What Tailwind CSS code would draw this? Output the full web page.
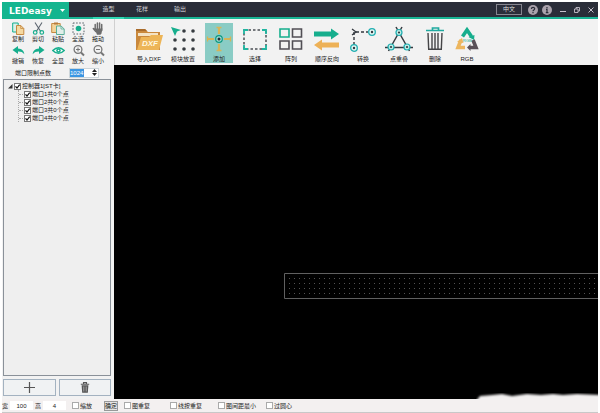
<!DOCTYPE html>
<html lang="zh-CN">
<head>
    <meta charset="UTF-8">
    <meta name="viewport" content="width=device-width, initial-scale=1.0">
    <title>LEDeasy</title>
    <script src="https://cdn.jsdelivr.net/npm/@tailwindcss/browser@4"></script>
</head>
<body class="h-screen overflow-hidden bg-white pl-0.5 pr-0.5 pt-0.5 flex flex-col font-['Liberation_Sans','Noto_Sans_CJK_SC',sans-serif] text-[6px] leading-[8px] text-[#222]">

    <!-- Title bar -->
    <header class="h-[17px] shrink-0 flex bg-[#2a2d39] border-b-2 border-[#18b595] text-[#d2d2d6]">
        <button class="w-[67px] h-[17px] shrink-0 bg-[#14b58f] text-white flex items-center justify-between pl-[7px] pr-1">
            <span class="font-['DejaVu_Sans',sans-serif] font-bold text-[9px]">LEDeasy</span>
            <svg class="w-[5px] h-[3px]" viewBox="0 0 5 3"><path d="M0 0h5L2.5 3z" fill="#fff"/></svg>
        </button>
        <nav class="flex ml-6">
            <a href="#" class="w-[31px] h-[17px] pt-[3px] text-center border-b-2 border-[#2fd8b4]">造型</a>
            <a href="#" class="w-9 pt-[3px] text-center">花样</a>
            <a href="#" class="w-10 pt-[3px] text-center">输出</a>
        </nav>
        <div class="ml-auto flex items-center pr-1">
            <button class="w-[26px] h-[11px] border border-[#85858f] text-[#ddd] leading-[9px] mr-[6px]">中文</button>
            <button aria-label="帮助" class="mr-1"><svg class="w-[10px] h-[10px]" viewBox="0 0 10 10"><circle cx="5" cy="5" r="5" fill="#aaa2ac"/><path d="M3.4 4C3.4 1.8 6.7 1.8 6.7 3.8 6.7 5 5 4.8 5 6.2M5 7v1.2" fill="none" stroke="#2a2d39" stroke-width="1.2"/></svg></button>
            <button aria-label="关于" class="mr-2"><svg class="w-[10px] h-[10px]" viewBox="0 0 10 10"><circle cx="5" cy="5" r="5" fill="#aaa2ac"/><path d="M5 1.9v1.3M4 4.3h1v3.3M3.8 7.6h2.6" fill="none" stroke="#2a2d39" stroke-width="1.2"/></svg></button>
            <button aria-label="最小化" class="mr-2"><svg class="w-[6px] h-[7px]" viewBox="0 0 6 7"><path d="M0 5.5h6" stroke="#c5c0cb"/></svg></button>
            <button aria-label="还原" class="mr-2"><svg class="w-[6px] h-[7px]" viewBox="0 0 6 7"><path d="M2 3V1.5h3.5V5H4M.5 3H4v3.5H.5z" fill="none" stroke="#c5c0cb" stroke-width=".9"/></svg></button>
            <button aria-label="关闭"><svg class="w-[6px] h-[7px]" viewBox="0 0 6 7"><path d="M.5 1.5l5 5M5.5 1.5l-5 5" stroke="#c5c0cb"/></svg></button>
        </div>
    </header>

    <div class="flex-1 min-h-0 flex">
        <!-- Left panel -->
        <aside class="w-28 shrink-0 bg-[#f2f2f2] flex flex-col pl-px pr-[3px]">
            <div class="grid grid-cols-5 pl-[5px] pr-[3px] pt-[3px] gap-y-px">
                <button class="flex flex-col items-center"><svg class="w-[13px] h-[13px]" viewBox="0 0 13 13"><path d="M.7 1h5.5v9H.7z" fill="#d9f1ea" stroke="#16ae8d"/><path d="M4.5 3.5h4.3l3 3v6H4.5z" fill="#f5d9a1" stroke="#c58a42"/><path d="M8.7 3.5v3h3" fill="none" stroke="#c58a42" stroke-width=".8"/></svg>复制</button>
                <button class="flex flex-col items-center"><svg class="w-[13px] h-[13px]" viewBox="0 0 13 13"><path d="M3 .5l5.700 9M10 .5l-5.700 9" stroke="#5d6670" stroke-width="1.100"/><g fill="none" stroke="#16ae8d" stroke-width="1.200"><circle cx="3.200" cy="10.400" r="1.800"/><circle cx="9.800" cy="10.400" r="1.800"/></g></svg>剪切</button>
                <button class="flex flex-col items-center"><svg class="w-[14px] h-[13px]" viewBox="0 0 14 13"><path d="M.7 1.500h8.500v9H.7z" fill="#f3d49a" stroke="#c58a42"/><path d="M3 .5h4v2H3z" fill="#b77b3a"/><path d="M5.500 4h4.700l3 3v5.500H5.500z" fill="#e1eee9" stroke="#5aae98"/><path d="M10 4v3h3" fill="none" stroke="#5aae98" stroke-width=".8"/></svg>粘贴</button>
                <button class="flex flex-col items-center"><svg class="w-[13px] h-[13px]" viewBox="0 0 13 13"><path d="M1 1h11v11H1z" fill="none" stroke="#59636b" stroke-dasharray="1.600 1.500"/><circle cx="6.500" cy="6.500" r="2.800" fill="#16ae8d"/></svg>全选</button>
                <button class="flex flex-col items-center"><svg class="w-[13px] h-[13px]" viewBox="0 0 13 13"><path d="M3.200 2.400v5M5.400 1v6M7.600 1v6M9.700 2.500v6M1.300 6.500l2.500 3" stroke="#6d6d6d" stroke-width="1.500" stroke-linecap="round"/><path d="M2.500 6.500h8l-1 4.800-1 1.400H5z" fill="#6d6d6d"/></svg>拖动</button>
                <button class="flex flex-col items-center"><svg class="w-[13px] h-[13px]" viewBox="0 0 13 13"><path d="M.5 6L6 2v2.600c4 .1 6 2.400 6.300 5.600C10.600 8 8.700 7.400 6 7.500V10z" fill="#16ae8d"/></svg>撤销</button>
                <button class="flex flex-col items-center"><svg class="w-[13px] h-[13px]" viewBox="0 0 13 13"><path d="M12.500 6L7 2v2.600C3 4.700 1 7 .7 10.200 2.400 8 4.300 7.400 7 7.500V10z" fill="#16ae8d"/></svg>恢复</button>
                <button class="flex flex-col items-center"><svg class="w-[13px] h-[13px]" viewBox="0 0 13 13"><path d="M.8 6.500Q6.500.8 12.200 6.500 6.500 12.200.8 6.500z" fill="#fff" stroke="#16ae8d" stroke-width="1.500"/><circle cx="6.500" cy="6.500" r="2.300" fill="#16ae8d"/><circle cx="6.500" cy="6.500" r=".8" fill="#fff"/></svg>全显</button>
                <button class="flex flex-col items-center"><svg class="w-[13px] h-[13px]" viewBox="0 0 13 13"><g fill="none" stroke="#777"><circle cx="6" cy="5.500" r="3.900" stroke-width="1.300"/><path d="M4 5.500h4M6 3.500v4"/><path d="M9 8.500l3 3" stroke-width="2"/></g></svg>放大</button>
                <button class="flex flex-col items-center"><svg class="w-[13px] h-[13px]" viewBox="0 0 13 13"><g fill="none" stroke="#777"><circle cx="6" cy="5.500" r="3.900" stroke-width="1.300"/><path d="M4 5.500h4"/><path d="M9 8.500l3 3" stroke-width="2"/></g></svg>缩小</button>
            </div>

            <div class="flex items-center h-[11px] mt-0.5 pl-3">
                <label for="limit">端口限制点数</label>
                <div class="ml-[18px] w-[30px] h-[10px] bg-white border border-[#ccd5da] flex items-center">
                    <input id="limit" type="text" value="1024" class="w-[14px] h-[8px] bg-[#3c96e2] text-white">
                    <span class="ml-auto flex flex-col gap-px pr-px">
                        <button aria-label="增加"><svg class="w-[5px] h-[3px] block" viewBox="0 0 5 3"><path d="M0 3h5L2.500 0z" fill="#222"/></svg></button>
                        <button aria-label="减少"><svg class="w-[5px] h-[3px] block" viewBox="0 0 5 3"><path d="M0 0h5L2.500 3z" fill="#222"/></svg></button>
                    </span>
                </div>
            </div>

            <!-- Controller tree -->
            <div class="flex-1 mt-px border border-[#8a9199] bg-[#efefef] pl-1 pt-0.5">
                <label class="flex items-center gap-px">
                    <svg class="w-[5px] h-[5px]" viewBox="0 0 5 5"><path d="M4.500 0v4.500H0z" fill="#333"/></svg>
                    <span class="grid"><input type="checkbox" checked class="[grid-area:1/1] appearance-none w-[7px] h-[7px] border border-[#777] bg-white"><svg class="[grid-area:1/1] w-[7px] h-[7px]" viewBox="0 0 7 7"><path d="M1.500 3.300L3 5l2.700-3.400" fill="none" stroke="#111" stroke-width="1.200"/></svg></span>
                    <span>控制器1[ST卡]</span>
                </label>
                <div class="ml-[10px] border-l border-dotted border-[#aaa]">
                    <label class="flex items-center gap-px"><span class="w-1 border-t border-dotted border-[#aaa]"></span><span class="grid"><input type="checkbox" checked class="[grid-area:1/1] appearance-none w-[7px] h-[7px] border border-[#777] bg-white"><svg class="[grid-area:1/1] w-[7px] h-[7px]" viewBox="0 0 7 7"><path d="M1.500 3.300L3 5l2.700-3.400" fill="none" stroke="#111" stroke-width="1.200"/></svg></span><span>端口1共0个点</span></label>
                    <label class="flex items-center gap-px"><span class="w-1 border-t border-dotted border-[#aaa]"></span><span class="grid"><input type="checkbox" checked class="[grid-area:1/1] appearance-none w-[7px] h-[7px] border border-[#777] bg-white"><svg class="[grid-area:1/1] w-[7px] h-[7px]" viewBox="0 0 7 7"><path d="M1.500 3.300L3 5l2.700-3.400" fill="none" stroke="#111" stroke-width="1.200"/></svg></span><span>端口2共0个点</span></label>
                    <label class="flex items-center gap-px"><span class="w-1 border-t border-dotted border-[#aaa]"></span><span class="grid"><input type="checkbox" checked class="[grid-area:1/1] appearance-none w-[7px] h-[7px] border border-[#777] bg-white"><svg class="[grid-area:1/1] w-[7px] h-[7px]" viewBox="0 0 7 7"><path d="M1.500 3.300L3 5l2.700-3.400" fill="none" stroke="#111" stroke-width="1.200"/></svg></span><span>端口3共0个点</span></label>
                    <label class="flex items-center gap-px"><span class="w-1 border-t border-dotted border-[#aaa]"></span><span class="grid"><input type="checkbox" checked class="[grid-area:1/1] appearance-none w-[7px] h-[7px] border border-[#777] bg-white"><svg class="[grid-area:1/1] w-[7px] h-[7px]" viewBox="0 0 7 7"><path d="M1.500 3.300L3 5l2.700-3.400" fill="none" stroke="#111" stroke-width="1.200"/></svg></span><span>端口4共0个点</span></label>
                </div>
            </div>

            <div class="grid grid-cols-2 gap-[3px] py-[3px]">
                <button aria-label="添加控制器" class="h-[17px] border border-[#a3b2c0] bg-[#f0f2f3] flex items-center justify-center"><svg class="w-[11px] h-[11px]" viewBox="0 0 11 11"><path d="M5.500 0v11M0 5.500h11" stroke="#555" stroke-width="1.200"/></svg></button>
                <button aria-label="删除控制器" class="h-[17px] border border-[#a3b2c0] bg-[#f0f2f3] flex items-center justify-center"><svg class="w-[10px] h-[11px]" viewBox="0 0 10 11"><path d="M3.500 1.800V.6h3v1.200M.8 2.300h8.400" fill="none" stroke="#555" stroke-width="1.100"/><path d="M1.600 3.200h6.800l-.6 7.500H2.200z" fill="#555"/><path d="M3.800 4.500v5M6.200 4.500v5" stroke="#ccc" stroke-width=".7"/></svg></button>
            </div>
        </aside>

        <main class="flex-1 min-w-0 flex flex-col">
            <!-- Toolbar -->
            <div class="h-[46px] shrink-0 bg-[#f2f2f2] border-l border-[#d0d0d0] flex items-start pl-[18px] pt-1">
                <button class="w-8 h-10 flex flex-col items-center justify-between pt-0.5"><svg class="w-7 h-[28px]" viewBox="0 0 28 28"><path d="M1 4h9l3 3h12v18H1z" fill="#c9883c"/><path d="M1 4h9l2 2H1z" fill="#a96c2c"/><path d="M3 8h20v3H3z" fill="#f4e3c5"/><path d="M2 25L6 12h8l2-2h12l-4 15z" fill="#edb557"/><text x="7" y="21" font-size="8" font-weight="bold" font-style="italic" fill="#fff8e0">DXF</text></svg><span class="whitespace-nowrap">导入DXF</span></button>
                <button class="w-9 h-10 flex flex-col items-center justify-between pt-0.5"><svg class="w-7 h-[28px]" viewBox="0 0 28 28"><g fill="#363b40"><circle cx="15" cy="6" r="1.800"/><circle cx="24" cy="6" r="1.800"/><circle cx="6" cy="15" r="1.800"/><circle cx="15" cy="15" r="1.800"/><circle cx="24" cy="15" r="1.800"/><circle cx="6" cy="24" r="1.800"/><circle cx="15" cy="24" r="1.800"/><circle cx="24" cy="24" r="1.800"/></g><path d="M2 2l10 3-4 1.500-2 4.500z" fill="#16ae8d"/></svg><span>模块放置</span></button>
                <button class="w-7 mx-1 h-10 bg-[#8accc5] flex flex-col items-center justify-between pt-0.5"><svg class="w-7 h-[28px]" viewBox="0 0 28 28"><path d="M14 2v7M14 19v7M2 14h7M19 14h7" stroke="#d6b458" stroke-width="2.200"/><path d="M11.500 2.500h5M11.500 25.500h5M2.500 11.500v5M25.500 11.500v5" stroke="#d6b458" stroke-width="1.300"/><circle cx="14" cy="14" r="3.300" fill="#a2ded4" stroke="#0c9880" stroke-width="1.200"/><circle cx="14" cy="14" r="1.500" fill="#263238"/></svg><span>添加</span></button>
                <button class="w-9 h-10 flex flex-col items-center justify-between pt-0.5"><svg class="w-7 h-[28px]" viewBox="0 0 28 28"><path d="M3 5h22v19H3z" fill="none" stroke="#4c5056" stroke-width="1.500" stroke-dasharray="2.500 2"/><path d="M3 9V5h4M21 5h4v4M25 20v4h-4M7 24H3v-4" fill="none" stroke="#20b5a0" stroke-width="1.800"/></svg><span>选择</span></button>
                <button class="w-9 h-10 flex flex-col items-center justify-between pt-0.5"><svg class="w-7 h-[28px]" viewBox="0 0 28 28"><g fill="none" stroke-width="1.600"><path d="M3 4h9v8H3z" stroke="#16ae8d"/><path d="M15.500 4h9v8h-9zM3 16h9v8H3zM15.500 16h9v8h-9z" stroke="#514f55"/></g></svg><span>阵列</span></button>
                <button class="w-9 h-10 flex flex-col items-center justify-between pt-0.5"><svg class="w-7 h-[28px]" viewBox="0 0 28 28"><path d="M1 6.500h17V3.500l8 5.500-8 5.500v-3H1z" fill="#16ae8d"/><path d="M26 17.500H9v-3l-8 5.500 8 5.500v-3h17z" fill="#edb157"/></svg><span>顺序反向</span></button>
                <button class="w-9 h-10 flex flex-col items-center justify-between pt-0.5"><svg class="w-7 h-[28px]" viewBox="0 0 28 28"><path d="M5 20V7h14" fill="none" stroke="#353a40" stroke-width="1.400" stroke-dasharray="3 2"/><path d="M3 4l4 3-4 3" fill="none" stroke="#353a40" stroke-width="1.300"/><g fill="#e3f6f3" stroke="#20aeb0" stroke-width="1.300"><circle cx="23" cy="7" r="3.300"/><circle cx="5" cy="23" r="3.300"/></g><circle cx="23" cy="7" r="1.200" fill="#353a40"/><circle cx="5" cy="23" r="1.200" fill="#353a40"/></svg><span>转换</span></button>
                <button class="w-9 h-10 flex flex-col items-center justify-between pt-0.5"><svg class="w-7 h-[28px]" viewBox="0 0 28 28"><path d="M11 2L24.500 26M17 2L3.500 26M0 22.500h28" fill="none" stroke="#353a40" stroke-width="1.500"/><g fill="#bfece5" stroke="#20aeb0" stroke-width="1.200"><circle cx="14" cy="7.500" r="3"/><circle cx="6" cy="22" r="3"/><circle cx="22" cy="22" r="3"/></g><g fill="#353a40"><circle cx="14" cy="7.500" r="1.100"/><circle cx="6" cy="22" r="1.100"/><circle cx="22" cy="22" r="1.100"/></g></svg><span>点重叠</span></button>
                <button class="w-9 h-10 flex flex-col items-center justify-between pt-0.5"><svg class="w-7 h-[28px]" viewBox="0 0 28 28"><path d="M5 5.500h18M11.500 5V3h6v2" fill="none" stroke="#20aaa0" stroke-width="1.700"/><path d="M7 8l.7 16.200h12.600L21 8M11 8v16M14 8v16M17 8v16" fill="none" stroke="#454548" stroke-width="1.400"/></svg><span>删除</span></button>
                <button class="w-7 h-10 flex flex-col items-center justify-between pt-0.5"><svg class="w-6 h-[28px]" viewBox="0 0 24 28"><g fill="none" stroke-width="3.600"><path d="M7.500 11.500L12 5l4.500 6.500" stroke="#16ae8d"/><path d="M6 15L3 22.500h7" stroke="#edb65e"/><path d="M18 15l3 7.500h-6" stroke="#5a5158"/></g><path d="M15.500 19v7L12 22.500z" fill="#5a5158"/><path d="M2 17l5-4 1.500 5z" fill="#edb65e"/><path d="M13.500 12l6-2-.5 5z" fill="#16ae8d"/><text x="8" y="17" font-size="4" fill="#16ae8d">RGB</text></svg><span>RGB</span></button>
            </div>

            <!-- Drawing area -->
            <div class="relative flex-1 bg-black overflow-hidden">
                <svg class="absolute left-[170px] right-0 top-[208px] h-[26px] w-full">
                    <defs><pattern id="led" x="3" y="3" width="5" height="5" patternUnits="userSpaceOnUse"><rect x="2" y="2" width="1" height="1" fill="#525252"/></pattern></defs>
                    <rect x="3" y="3" width="100%" height="20" fill="url(#led)"/>
                    <path d="M1200 .5H.5v25h1200" fill="none" stroke="#606060"/>
                </svg>
                <svg class="absolute right-0 bottom-0 w-[122px] h-[6px]" viewBox="0 0 122 6">
                    <defs><filter id="soft"><feGaussianBlur stdDeviation=".8"/></filter></defs>
                    <path d="M0 8L4 3l12-1 10-1 10 2 15-2 14 1 12-1 10 1 14-1 23 1v8H0z" fill="#f2f0f0" filter="url(#soft)"/>
                </svg>
            </div>
        </main>
    </div>

    <!-- Status bar -->
    <footer class="h-[14px] shrink-0 bg-[#f3f0f0] border-b border-[#c8c8c8] flex items-center">
        <label for="w">宽</label>
        <input id="w" type="text" value="100" class="w-[23px] h-[9px] ml-0.5 bg-white text-center">
        <label for="h" class="ml-0.5">高</label>
        <input id="h" type="text" value="4" class="w-[23px] h-[9px] ml-0.5 bg-white text-center">
        <label class="flex items-center gap-px ml-1.5"><input type="checkbox" class="appearance-none w-[7px] h-[7px] border border-[#aaa] bg-white">缩放</label>
        <button class="w-[14px] h-[10px] ml-3 border border-[#999] bg-[#e4e4e4] leading-[8px]">确定</button>
        <label class="flex items-center gap-px ml-1.5"><input type="checkbox" class="appearance-none w-[7px] h-[7px] border border-[#aaa] bg-white">图重复</label>
        <label class="flex items-center gap-px ml-5"><input type="checkbox" class="appearance-none w-[7px] h-[7px] border border-[#aaa] bg-white">线按重复</label>
        <label class="flex items-center gap-px ml-4"><input type="checkbox" class="appearance-none w-[7px] h-[7px] border border-[#aaa] bg-white">图间距最小</label>
        <label class="flex items-center gap-px ml-[10px]"><input type="checkbox" class="appearance-none w-[7px] h-[7px] border border-[#aaa] bg-white">过圆心</label>
    </footer>
</body>
</html>
